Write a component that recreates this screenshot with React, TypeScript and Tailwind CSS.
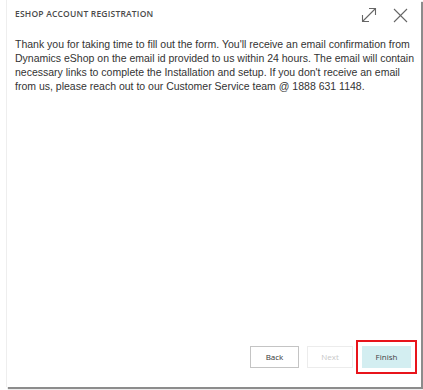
import React from 'react';

const font = { fontFamily: '"Open Sans", "Liberation Sans", sans-serif' };
const body = { fontFamily: '"Liberation Sans", Arial, sans-serif' };

export default function App() {
  return (
    <div className="w-[423px] h-[390px] bg-white flex" style={font}>
      <div className="ml-[6px] mt-0 w-[415px] h-[387px] bg-white border-l border-[#eeeeee] shadow-[2px_2px_1px_rgba(0,0,0,0.45)] flex flex-col">
        {/* header */}
        <div className="flex items-center justify-between pl-[8px] pr-[13px] pt-[7px] h-[23px]">
          <h1 className="text-[8.5px] font-semibold text-[#4a4a4a] tracking-[0.2px] uppercase -mt-[2px]">
            Eshop Account Registration
          </h1>
          <div className="flex items-center gap-[16px]">
            <svg width="16" height="16" viewBox="0 0 16 16" fill="none" stroke="#666" strokeWidth="1.1">
              <line x1="1.5" y1="14.5" x2="14.5" y2="1.5" />
              <polyline points="8,1.5 14.5,1.5 14.5,8" />
              <polyline points="1.5,8 1.5,14.5 8,14.5" />
            </svg>
            <svg width="15" height="15" viewBox="0 0 15 15" fill="none" stroke="#666" strokeWidth="1.1">
              <line x1="1" y1="1" x2="14" y2="14" />
              <line x1="14" y1="1" x2="1" y2="14" />
            </svg>
          </div>
        </div>

        {/* body */}
        <p className="pl-[8px] mt-[14px] text-[10.5px] leading-[14px] text-[#333] whitespace-nowrap" style={body}>
          Thank you for taking time to fill out the form. You'll receive an email confirmation from
          <br />
          Dynamics eShop on the email id provided to us within 24 hours. The email will contain
          <br />
          necessary links to complete the Installation and setup. If you don't receive an email
          <br />
          from us, please reach out to our Customer Service team @ 1888 631 1148.
        </p>

        {/* footer */}
        <div className="mt-auto mb-[13px] pr-[4px] flex items-center justify-end">
          <button className="w-[49px] h-[22px] border border-[#c4c4c4] bg-white text-[8px] text-[#333]">
            Back
          </button>
          <button className="ml-[8px] w-[46px] h-[22px] border border-[#ececec] bg-white text-[8px] text-[#c8c8c8]">
            Next
          </button>
          <div className="ml-[3px] p-[4px] border-2 border-[#e8141b]">
            <button className="block w-[49px] h-[22px] bg-[#d3eef1] text-[8px] text-[#444]">
              Finish
            </button>
          </div>
        </div>
      </div>
    </div>
  );
}
